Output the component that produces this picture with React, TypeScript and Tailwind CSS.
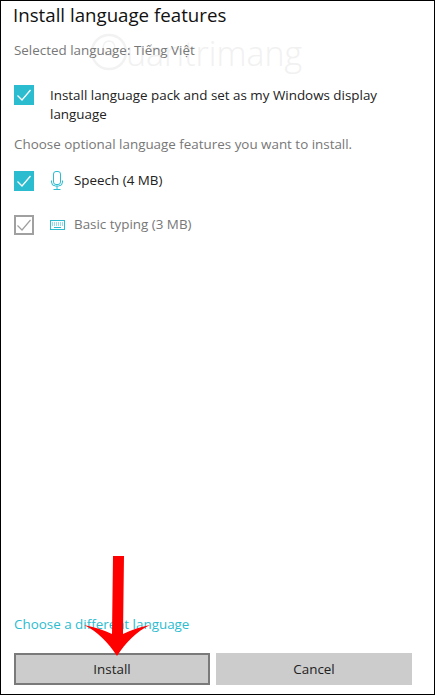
export default function App() {
  const font = { fontFamily: '"Open Sans", "Noto Sans", sans-serif' };
  return (
    <div style={font} className="relative flex h-[695px] w-[435px] flex-col overflow-hidden border border-black bg-white pl-[13px] pr-[22px] pb-[9px] text-[13.4px] text-[#111]">
      <div className="absolute left-[88px] top-[29px] flex items-center">
        <svg width="40" height="42" viewBox="0 0 40 42" fill="none" stroke="#f2f2f2" strokeWidth="2.5"><circle cx="20" cy="21" r="17" /><path d="M20 10a6 6 0 0 0-3 11v3h6v-3a6 6 0 0 0-3-11z" strokeWidth="1.5" /></svg>
        <span className="ml-[-3px] mt-[2px] text-[34px] font-light leading-[42px] text-[#f1f1f1]">uantrimang</span>
      </div>
      <h1 className="relative ml-[-1px] h-[28px] text-[18.7px] font-normal leading-[28px] text-[#111]">Install language features</h1>
      <p className="relative mt-[12px] h-[18px] leading-[18px] text-[#777]">Selected language: Tiếng Việt</p>
      <div className="relative mt-[26px] flex gap-[16px]">
        <Check />
        <p className="w-[350px] mt-[1px] leading-[19px] text-[#222]">Install language pack and set as my Windows display language</p>
      </div>
      <p className="mt-[11px] h-[18px] leading-[18px] text-[#777]">Choose optional language features you want to install.</p>
      <div className="mt-[18px] flex h-[20px] items-center">
        <Check />
        <svg className="ml-[16px]" width="14" height="20" viewBox="0 0 14 20" fill="none" stroke="#2bbcd0" strokeWidth="1">
          <rect x="3.5" y="0.5" width="7" height="13" rx="2.5" />
          <path d="M1.5 9.5v1.5a4 4 0 0 0 4 4h3a4 4 0 0 0 4-4v-1.5M7 15v3.5M3.5 18.5h7" />
        </svg>
        <span className="ml-[10px] mt-[-2px] text-[#222]">Speech (4 MB)</span>
      </div>
      <div className="mt-[24px] flex h-[20px] items-center">
        <div className="flex h-[20px] w-[20px] items-center justify-center border-2 border-[#a0a0a0]">
          <svg width="16" height="14" viewBox="0 0 16 14" fill="none" stroke="#a0a0a0" strokeWidth="1.2"><path d="M1.5 7.5l4.5 4.5 8.5-10" /></svg>
        </div>
        <svg className="ml-[16px]" width="15" height="10" viewBox="0 0 15 10" fill="none" stroke="#2bbcd0" strokeWidth="1">
          <rect x="0.5" y="0.5" width="14" height="9" />
          <path d="M2 3h11M2 5h11" strokeDasharray="1 1" />
          <path d="M4 7.5h7" />
        </svg>
        <span className="ml-[9px] mt-[-2px] text-[#777]">Basic typing (3 MB)</span>
      </div>
      <a className="mt-auto h-[20px] leading-[20px] text-[#2bbcd0]">Choose a different language</a>
      <div className="mt-[19px] flex gap-[6px]">
        <button className="h-[32px] w-[196px] border-2 border-[#7a7a7a] bg-[#cccccc] text-[#222]">Install</button>
        <button className="h-[32px] w-[196px] bg-[#cccccc] text-[#222]">Cancel</button>
      </div>
      <svg className="absolute left-[83px] top-[555px]" width="66" height="100" viewBox="0 0 66 100" fill="#ff0000">
        <path d="M29 0h11l-1 78C47 74 56 71 66 69 52 76 42 86 33 100 24 86 14 76 0 69 10 71 20 74 28 78z" />
      </svg>
    </div>
  );
}

function Check() {
  return (
    <div className="flex h-[20px] w-[20px] shrink-0 items-center justify-center bg-[#2bbcd0]">
      <svg width="16" height="14" viewBox="0 0 16 14" fill="none" stroke="#fff" strokeWidth="1.3"><path d="M1.5 7.5l4.5 4.5 8.5-10" /></svg>
    </div>
  );
}
